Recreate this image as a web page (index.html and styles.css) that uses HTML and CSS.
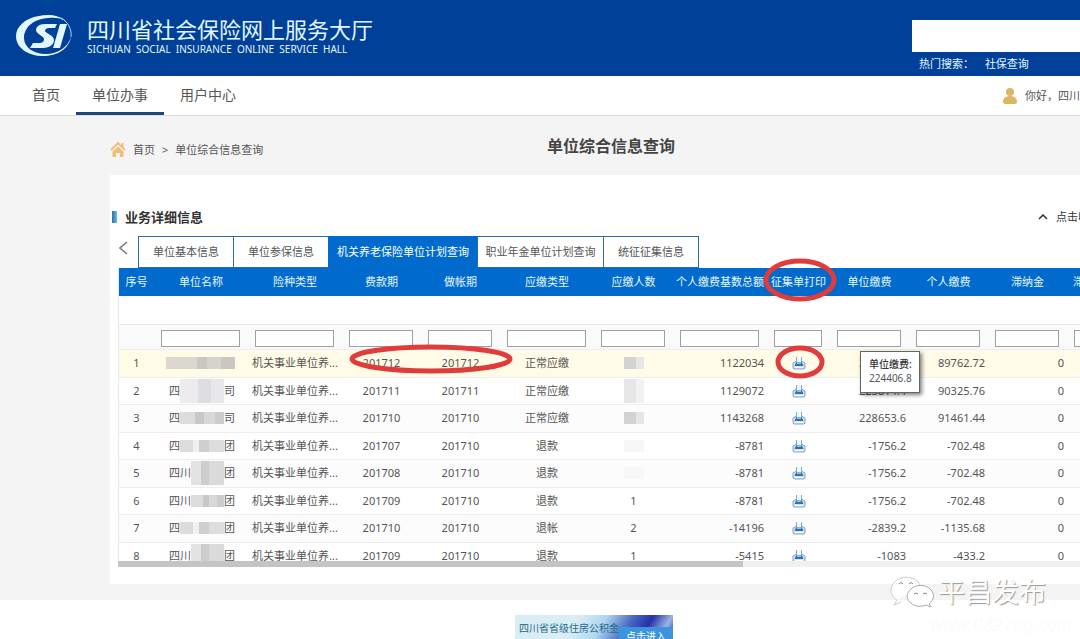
FILE: index.html
```html
<!DOCTYPE html>
<html lang="zh-CN">
<head>
    <meta charset="UTF-8">
    <meta name="viewport" content="width=device-width, initial-scale=1.0">
    <title>四川省社会保险网上服务大厅</title>
    <link rel="stylesheet" href="styles.css">
</head>
<body>

    <svg class="sprite" aria-hidden="true">
        <symbol id="printer" viewBox="0 0 14 14">
            <path d="M3 6l1-1h6l1 1 2 1v5l-1 1H2l-1-1V7z" fill="#d5e2f1" stroke="#8ba3c4"/>
            <path d="M4.500 1h5v6h-5z" fill="#eefaff"/>
            <path d="M4.500 1v6M9.500 1v6" stroke="#79add6" fill="none"/>
            <path d="M4 6.500h6l1.500 3.500h-9z" fill="#2f72b2"/>
            <path d="M5 7.500h4" stroke="#8ec4ea"/>
            <path d="M3 11.500h8" stroke="#fff"/>
        </symbol>
    </svg>

    <header class="top">
        <a class="brand" href="#">
            <svg class="logo" viewBox="0 0 56 42" aria-hidden="true">
                <path fill="#e2f8ff" fill-rule="evenodd" d="M50 6C43 0 32-1 23 1 9 3 0 12 0 21c0 12 12 20 27 20 14 0 26-7 28-19-3 10-13 17-25 17-13 0-22-7-22-16C8 12 18 4 32 3c7-1 13 0 18 3z"/>
                <path fill="none" stroke="#a9d8f3" d="M45 3c7 4 11 11 10 19"/>
                <path fill="#e2f8ff" d="M41 9H29c-6 0-9 3-9 6 0 4 8 6 8 9 0 3-2 4-5 4h-6l-3 5h13c7 0 11-4 11-8 0-5-9-7-9-9 0-2 2-3 4-3h6zM44 9h7l-7 24h-7z"/>
            </svg>
            <span class="brand-text">
                <span class="brand-name">四川省社会保险网上服务大厅</span>
                <span class="brand-sub">SICHUAN  SOCIAL  INSURANCE  ONLINE  SERVICE  HALL</span>
            </span>
        </a>
        <form class="search">
            <input type="text" aria-label="搜索">
            <p>热门搜索： <a href="#">社保查询</a></p>
        </form>
    </header>

    <nav class="nav">
        <a href="#">首页</a>
        <a class="active" href="#">单位办事</a>
        <a href="#">用户中心</a>
        <div class="user">
            <svg viewBox="0 0 14 16" aria-hidden="true">
                <circle cx="7" cy="4" r="4" fill="#dcb765"/>
                <path d="M0 14c0-4 3-6 7-6s7 2 7 6c0 1-1 2-2 2H2c-1 0-2-1-2-2z" fill="#dcb765"/>
            </svg>
            <span>你好，四川</span>
        </div>
    </nav>

    <main class="main">
        <div class="page-head">
            <div class="crumbs">
                <svg viewBox="0 0 16 16" aria-hidden="true">
                    <path d="M1 8l7-7 7 7M12.500 1v4" fill="none" stroke="#f3bd74" stroke-width="2"/>
                    <path d="M8 4.500l5.500 5V15H10v-4H6v4H2.500V9.500z" fill="#f3bd74"/>
                </svg>
                <a href="#">首页</a>
                <span>&gt;</span>
                <span>单位综合信息查询</span>
            </div>
            <h1>单位综合信息查询</h1>
        </div>

        <section class="card">
            <div class="card-head">
                <h2>业务详细信息</h2>
                <button class="fold" type="button">
                    <svg viewBox="0 0 10 6" aria-hidden="true"><path d="M1 5l4-4 4 4" fill="none" stroke="#333" stroke-width="1.500"/></svg>
                    <span>点击收</span>
                </button>
            </div>

            <div class="tabs">
                <button class="prev" type="button" aria-label="向左">
                    <svg viewBox="0 0 9 14" aria-hidden="true"><path d="M8 1L1 7l7 6" fill="none" stroke="#777" stroke-width="1.500"/></svg>
                </button>
                <button class="tab" type="button">单位基本信息</button>
                <button class="tab" type="button">单位参保信息</button>
                <button class="tab wide on" type="button">机关养老保险单位计划查询</button>
                <button class="tab mid" type="button">职业年金单位计划查询</button>
                <button class="tab" type="button">统征征集信息</button>
            </div>

            <div class="grid">
                <div class="grid-view">
                    <table>
                        <colgroup>
                            <col class="c-no"><col class="c-l"><col class="c-l"><col class="c-m"><col class="c-m"><col class="c-l"><col class="c-m"><col class="c-l"><col class="c-s"><col class="c-m"><col class="c-m"><col class="c-m"><col class="c-m">
                        </colgroup>
                        <thead>
                            <tr class="titles">
                                <th>序号</th><th>单位名称</th><th>险种类型</th><th>费款期</th><th>做帐期</th><th>应缴类型</th><th>应缴人数</th><th>个人缴费基数总额</th><th>征集单打印</th><th>单位缴费</th><th>个人缴费</th><th>滞纳金</th><th class="cut">滞纳金</th>
                            </tr>
                            <tr class="blank"><td colspan="13"></td></tr>
                            <tr class="filters">
                                <td></td>
                                <td><input type="text" aria-label="单位名称"></td>
                                <td><input type="text" aria-label="险种类型"></td>
                                <td><input type="text" aria-label="费款期"></td>
                                <td><input type="text" aria-label="做帐期"></td>
                                <td><input type="text" aria-label="应缴类型"></td>
                                <td><input type="text" aria-label="应缴人数"></td>
                                <td><input type="text" aria-label="个人缴费基数总额"></td>
                                <td><input type="text" aria-label="征集单打印"></td>
                                <td><input type="text" aria-label="单位缴费"></td>
                                <td><input type="text" aria-label="个人缴费"></td>
                                <td><input type="text" aria-label="滞纳金"></td>
                                <td><input type="text" aria-label="滞纳金"></td>
                            </tr>
                        </thead>
                        <tbody id="rows"></tbody>
                    </table>
                </div>
                <div class="scroll"><div class="thumb"></div></div>

                <!-- hand drawn marks and the value tip float over the table -->
                <svg class="marks" aria-hidden="true">
                    <ellipse cx="313" cy="91" rx="79" ry="12"/>
                    <ellipse cx="682" cy="12" rx="34" ry="19"/>
                    <ellipse cx="682" cy="94" rx="22" ry="14"/>
                </svg>
                <div class="tip"><b>单位缴费:</b><span>224406.8</span></div>
            </div>
        </section>

        <div class="watermark">
            <svg viewBox="0 0 44 32" aria-hidden="true">
                <path d="M7 24l-3 5 7-3M7 24C1 20-1 14 3 8 7 2 15 0 21 2c5 1 8 4 9 8" fill="#fff" stroke="#ccc"/>
                <path d="M39 28c5-4 6-10 2-14-5-6-15-6-20-1-5 4-5 11 0 14 4 4 10 4 15 2l5 2z" fill="#fff" stroke="#aaa"/>
                <path d="M9 8q2-3 4 0M19 8q2-3 4 0M24 18q2-2 4 0M33 18q2-2 4 0" fill="none" stroke="#888"/>
            </svg>
            <span>平昌发布</span>
        </div>
    </main>

    <footer class="foot">
        <a class="banner" href="#">
            <span class="banner-text">四川省省级住房公积金</span>
            <span class="enter">点击进入</span>
        </a>
        <span class="site">www.0827ug.com</span>
    </footer>

    <script>
        // name start, name end, mosaic style, month, booked, type, people, base, unit, personal
        const rows = [
            ['四', '', 'a', '201712', '201712', '正常应缴', 'p1', '1122034', '224406.8', '89762.72'],
            ['四', '司', 'b', '201711', '201711', '正常应缴', 'p2', '1129072', '225814.4', '90325.76'],
            ['四', '司', 'c', '201710', '201710', '正常应缴', 'p3', '1143268', '228653.6', '91461.44'],
            ['四', '团', 'd', '201707', '201710', '退款', 'p4', '-8781', '-1756.2', '-702.48'],
            ['四川', '团', 'e', '201708', '201710', '退款', 'p5', '-8781', '-1756.2', '-702.48'],
            ['四川', '团', 'c', '201709', '201710', '退款', '1', '-8781', '-1756.2', '-702.48'],
            ['四', '团', 'd', '201710', '201710', '退帐', '2', '-14196', '-2839.2', '-1135.68'],
            ['四川', '团', 'e', '201709', '201710', '退款', '1', '-5415', '-1083', '-433.2']
        ];

        document.getElementById('rows').innerHTML = rows.map((r, i) => {
            const people = r[6][0] === 'p' ? `<i class="hide ${r[6]}"></i>` : r[6];
            return `<tr>
                <td>${i + 1}</td>
                <td><div class="name"><span>${r[0]}</span><i class="mosaic ${r[2]}"></i><span class="end">${r[1]}</span></div></td>
                <td>机关事业单位养...</td>
                <td>${r[3]}</td><td>${r[4]}</td><td>${r[5]}</td><td>${people}</td>
                <td class="num">${r[7]}</td>
                <td><button class="print" type="button" aria-label="打印"><svg><use href="#printer"/></svg></button></td>
                <td class="num">${r[8]}</td><td class="num">${r[9]}</td><td class="num">0</td><td></td>
            </tr>`;
        }).join('');
    </script>

</body>
</html>
```
FILE: styles.css
```css
* {
    margin: 0;
    padding: 0;
    box-sizing: border-box;
}

body {
    font-family: "Noto Sans", "Noto Sans CJK SC", sans-serif;
    font-size: 11px;
    line-height: 16px;
    color: #555;
    background: #fff;
    overflow: hidden;
}

a {
    color: inherit;
    text-decoration: none;
}

button,
input {
    font: inherit;
    color: inherit;
}

button {
    background: none;
    border: none;
    cursor: pointer;
}

.sprite {
    display: none;
}

/* header */

.top {
    display: flex;
    justify-content: space-between;
    height: 76px;
    background: #004098;
    color: #e2f8ff;
}

.brand {
    display: flex;
    align-items: flex-start;
    gap: 15px;
    padding: 15px 0 0 16px;
}

.logo {
    width: 56px;
    height: 42px;
}

.brand-text {
    display: flex;
    flex-direction: column;
    white-space: nowrap;
}

.brand-name {
    font-size: 22px;
    line-height: 28px;
}

.brand-sub {
    font-size: 10px;
    line-height: 12px;
    white-space: pre;
}

.search {
    width: 168px;
    padding-top: 20px;
}

.search input {
    display: block;
    width: 100%;
    height: 32px;
    background: #fff;
    border: none;
}

.search p {
    padding: 4px 0 0 7px;
}

.search a {
    margin-left: 8px;
}

.nav {
    display: flex;
    height: 40px;
    padding-left: 16px;
    background: #fff;
    border-bottom: 1px solid #ddd;
    font-size: 14px;
    line-height: 38px;
}

.nav > a {
    padding: 0 16px;
    height: 39px;
}

.nav .active {
    border-bottom: 3px solid #1c4680;
}

.user {
    display: flex;
    align-items: center;
    gap: 8px;
    width: 77px;
    margin-left: auto;
    font-size: 11px;
    white-space: nowrap;
    overflow: hidden;
}

.user svg {
    flex: none;
    width: 14px;
    height: 16px;
}

/* content */

.main {
    position: relative;
    padding: 0 0 16px 110px;
    background: #f4f4f4;
}

.page-head {
    display: flex;
    height: 59px;
}

.crumbs {
    display: flex;
    align-items: center;
    gap: 7px;
    width: 437px;
    padding-top: 8px;
}

.crumbs svg {
    width: 16px;
    height: 16px;
}

h1 {
    font-size: 16px;
    line-height: 60px;
    color: #444;
}

.card {
    padding: 32px 0 17px 0;
    background: #fff;
}

.card-head {
    display: flex;
    justify-content: space-between;
    align-items: center;
    height: 20px;
    margin-bottom: 9px;
}

h2 {
    display: flex;
    align-items: center;
    gap: 8px;
    padding-left: 2px;
    font-size: 13px;
    color: #333;
}

h2::before {
    content: "";
    width: 5px;
    height: 12px;
    background: linear-gradient(90deg, #2675a8, #6cbbe0);
}

.fold {
    display: flex;
    align-items: center;
    gap: 8px;
    width: 42px;
    white-space: nowrap;
    overflow: hidden;
    color: #333;
}

.fold svg {
    flex: none;
    width: 10px;
    height: 6px;
}

.tabs {
    display: flex;
    height: 32px;
    padding-left: 9px;
}

.prev {
    width: 19px;
    height: 24px;
    text-align: left;
}

.prev svg {
    display: block;
    width: 9px;
    height: 14px;
}

.tab {
    width: 96px;
    height: 32px;
    margin-right: -1px;
    border: 1px solid #2a6bab;
    background: #fff;
    white-space: nowrap;
}

.tab.wide {
    width: 150px;
}

.tab.mid {
    width: 127px;
}

.tab.on {
    background: #006bcd;
    border-color: #006bcd;
    color: #fff;
}

/* data grid */

.grid {
    position: relative;
    margin-left: 8px;
}

.grid-view {
    max-height: 293px;
    overflow: hidden;
    border-left: 1px solid #e8e8e8;
}

table {
    width: 1027px;
    table-layout: fixed;
    border-collapse: collapse;
    text-align: center;
    white-space: nowrap;
}

.c-no { width: 35px; }
.c-s { width: 63px; }
.c-m { width: 79px; }
.c-l { width: 94px; }

.titles {
    height: 28px;
    background: #006bcd;
    color: #e8f7ff;
}

.titles th {
    font-weight: normal;
}

.titles .cut {
    text-align: left;
    padding-left: 6px;
}

.blank {
    height: 28px;
}

.filters {
    height: 25px;
    background: #fafafa;
    border-top: 1px solid #e8e8e8;
}

.filters td {
    padding: 5px 8px 0 7px;
    vertical-align: top;
}

.filters input {
    display: block;
    width: 100%;
    height: 17px;
    border: 1px solid #a0a0a0;
    background: #fff;
}

tbody tr {
    height: 27px;
    border-top: 1px solid #eee;
}

tbody tr:nth-child(odd) {
    height: 28px;
    background: #fcfcfd;
}

tbody tr:first-child {
    background: #fffbe6;
}

tbody .num {
    padding-right: 3px;
    text-align: right;
}

.name {
    display: flex;
    align-items: center;
    height: 24px;
    padding: 0 13px 0 15px;
}

/* blurred out part of the unit name, lies over the text around it */
.mosaic {
    position: relative;
    flex: 1;
    height: 12px;
    background: linear-gradient(90deg, #dcdcdc 0 35%, #c8c8c8 35% 55%, #d8d8d8 55% 80%, #ccc 80%);
}

.mosaic.a {
    margin-left: -14px;
    background: linear-gradient(90deg, #dad8cf 0 45%, #c9c7c0 45% 60%, #d5d3ca 60% 80%, #c9c7c0 80%);
}

.mosaic.b {
    height: 24px;
    background: linear-gradient(90deg, #ececec 0 40%, #dedee0 40% 70%, #e8e8ea 70%);
}

.mosaic.d {
    background: linear-gradient(90deg, #dcdcdc 0 30%, #f0f0f0 30% 43%, #cfcfcf 43% 65%, #ddd 65%);
}

.mosaic.e {
    height: 24px;
    background: linear-gradient(90deg, #e3e3e3 0 30%, #cdcdcd 30% 55%, #dadada 55%);
}

.mosaic:not(.a) + .end {
    margin-left: -4px;
    padding-left: 4px;
}

.hide {
    display: block;
    width: 20px;
    height: 12px;
    margin: 0 auto;
    background: linear-gradient(90deg, #d2d2d2 60%, #e6e6e6 60%);
}

.hide.p2 {
    height: 24px;
    background: linear-gradient(90deg, #e6e6e6 60%, #f2f2f2 60%);
}

.hide.p4,
.hide.p5 {
    background: #f7f7f8;
}

.print {
    display: block;
    margin: 0 auto;
}

.print svg {
    display: block;
    width: 14px;
    height: 14px;
}

.scroll {
    height: 6px;
    background: #f0f0f0;
}

.thumb {
    width: 65%;
    height: 6px;
    background: #c4c4c4;
}

.marks {
    position: absolute;
    top: 0;
    left: 0;
    width: 100%;
    height: 100%;
    overflow: visible;
    pointer-events: none;
}

.marks ellipse {
    fill: none;
    stroke: #e03c3c;
    stroke-width: 5;
}

.tip {
    position: absolute;
    top: 83px;
    left: 742px;
    display: flex;
    flex-direction: column;
    padding: 5px 7px 7px 8px;
    background: #fff;
    border: 1px solid #666;
    box-shadow: 2px 2px 4px rgba(0, 0, 0, 0.5);
    font-size: 10px;
    line-height: 14px;
}

.tip b {
    font-weight: 500;
    color: #333;
}

.watermark {
    position: absolute;
    right: 34px;
    bottom: -10px;
    display: flex;
    align-items: center;
    gap: 4px;
    font-size: 27px;
    line-height: 36px;
    color: #fff;
    text-shadow: 1px 1px 1px #999;
}

.watermark svg {
    width: 44px;
    height: 32px;
}

/* footer banner */

.foot {
    position: relative;
    display: flex;
    justify-content: center;
    padding-top: 15px;
    min-height: 39px;
}

.banner {
    display: flex;
    justify-content: space-between;
    width: 158px;
    height: 48px;
    margin-left: 108px;
    padding-left: 4px;
    background: linear-gradient(120deg, #d9edf5 0 35%, #aed6ee 50%, #4565c0 65%, #2a2fa8 75%, #9db5e5 85%, #2c38ae 92%);
    color: #276a8c;
    font-size: 10px;
    line-height: 26px;
    white-space: nowrap;
}

.enter {
    width: 54px;
    height: 36px;
    margin: 12px 0 0 -16px;
    background: #3c95dc;
    color: #fff;
    line-height: 18px;
    text-align: center;
}

.site {
    position: absolute;
    top: 16px;
    right: 8px;
    font-size: 18px;
    font-style: italic;
    color: #fafcfc;
}
```
